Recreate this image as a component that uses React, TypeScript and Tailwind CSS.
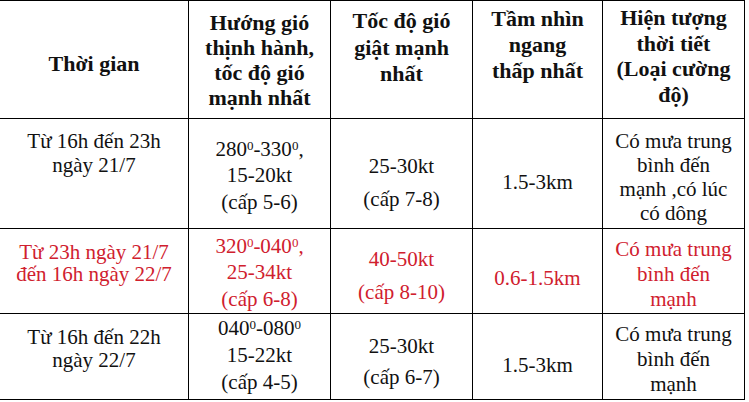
import type { ReactNode } from "react";

type Cell = {
  lines: ReactNode[];
  lh: number;
  pt: number;
};

const Deg = () => <sup className="top-[-0.45em] text-[13px]">0</sup>;

const header: Cell[] = [
  { lines: ["Thời gian"], lh: 26, pt: 50 },
  { lines: ["Hướng gió", "thịnh hành,", "tốc độ gió", "mạnh nhất"], lh: 25, pt: 9 },
  { lines: ["Tốc độ gió", "giật mạnh", "nhất"], lh: 26.5, pt: 7 },
  { lines: ["Tầm nhìn", "ngang", "thấp nhất"], lh: 26, pt: 5 },
  { lines: ["Hiện tượng", "thời tiết", "(Loại cường", "độ)"], lh: 25.5, pt: 4 },
];

const rows: { red?: boolean; cells: Cell[] }[] = [
  {
    cells: [
      { lines: ["Từ 16h đến 23h", "ngày 21/7"], lh: 24, pt: 10 },
      {
        lines: [
          <>
            280<Deg />-330<Deg />,
          </>,
          "15-20kt",
          "(cấp 5-6)",
        ],
        lh: 26.5,
        pt: 17,
      },
      { lines: ["25-30kt", "(cấp 7-8)"], lh: 33, pt: 31 },
      { lines: ["1.5-3km"], lh: 24, pt: 51 },
      { lines: ["Có mưa trung", "bình đến", "mạnh ,có lúc", "có dông"], lh: 24, pt: 10 },
    ],
  },
  {
    red: true,
    cells: [
      { lines: ["Từ 23h ngày 21/7", "đến 16h ngày 22/7"], lh: 22, pt: 12 },
      {
        lines: [
          <>
            320<Deg />-040<Deg />,
          </>,
          "25-34kt",
          "(cấp 6-8)",
        ],
        lh: 26.5,
        pt: 4,
      },
      { lines: ["40-50kt", "(cấp 8-10)"], lh: 33, pt: 14 },
      { lines: ["0.6-1.5km"], lh: 24, pt: 37 },
      { lines: ["Có mưa trung", "bình đến", "mạnh"], lh: 25, pt: 8 },
    ],
  },
  {
    cells: [
      { lines: ["Từ 16h đến 22h", "ngày 22/7"], lh: 23, pt: 12 },
      {
        lines: [
          <>
            040<Deg />-080<Deg />
          </>,
          "15-22kt",
          "(cấp 4-5)",
        ],
        lh: 27,
        pt: 1,
      },
      { lines: ["25-30kt", "(cấp 6-7)"], lh: 31, pt: 17 },
      { lines: ["1.5-3km"], lh: 24, pt: 39 },
      { lines: ["Có mưa trung", "bình đến", "mạnh"], lh: 25, pt: 8 },
    ],
  },
];

function CellBox({ cell, className }: { cell: Cell; className: string }) {
  return (
    <div
      className={`flex flex-col items-center border-r-[1.5px] border-b-[1.5px] border-black text-center [font-family:Liberation_Serif,serif] ${className}`}
      style={{ paddingTop: cell.pt }}
    >
      {cell.lines.map((l, i) => (
        <div key={i} className="whitespace-nowrap" style={{ lineHeight: `${cell.lh}px` }}>
          {l}
        </div>
      ))}
    </div>
  );
}

export default function App() {
  return (
    <div className="min-h-[402px] w-[749px] bg-white text-[#111] [font-family:Liberation_Serif,serif]">
      <div className="grid w-[745px] grid-cols-[189px_142px_142px_130px_142px] grid-rows-[117.5px_110px_85px_86px] border-t-[1.5px] border-black">
        {header.map((c, i) => (
          <CellBox key={i} cell={c} className="text-[22px] font-bold" />
        ))}
        {rows.map((r, ri) =>
          r.cells.map((c, ci) => (
            <CellBox
              key={`${ri}-${ci}`}
              cell={c}
              className={r.red ? "text-[21px] text-[#d0202e]" : "text-[21px]"}
            />
          )),
        )}
      </div>
    </div>
  );
}
